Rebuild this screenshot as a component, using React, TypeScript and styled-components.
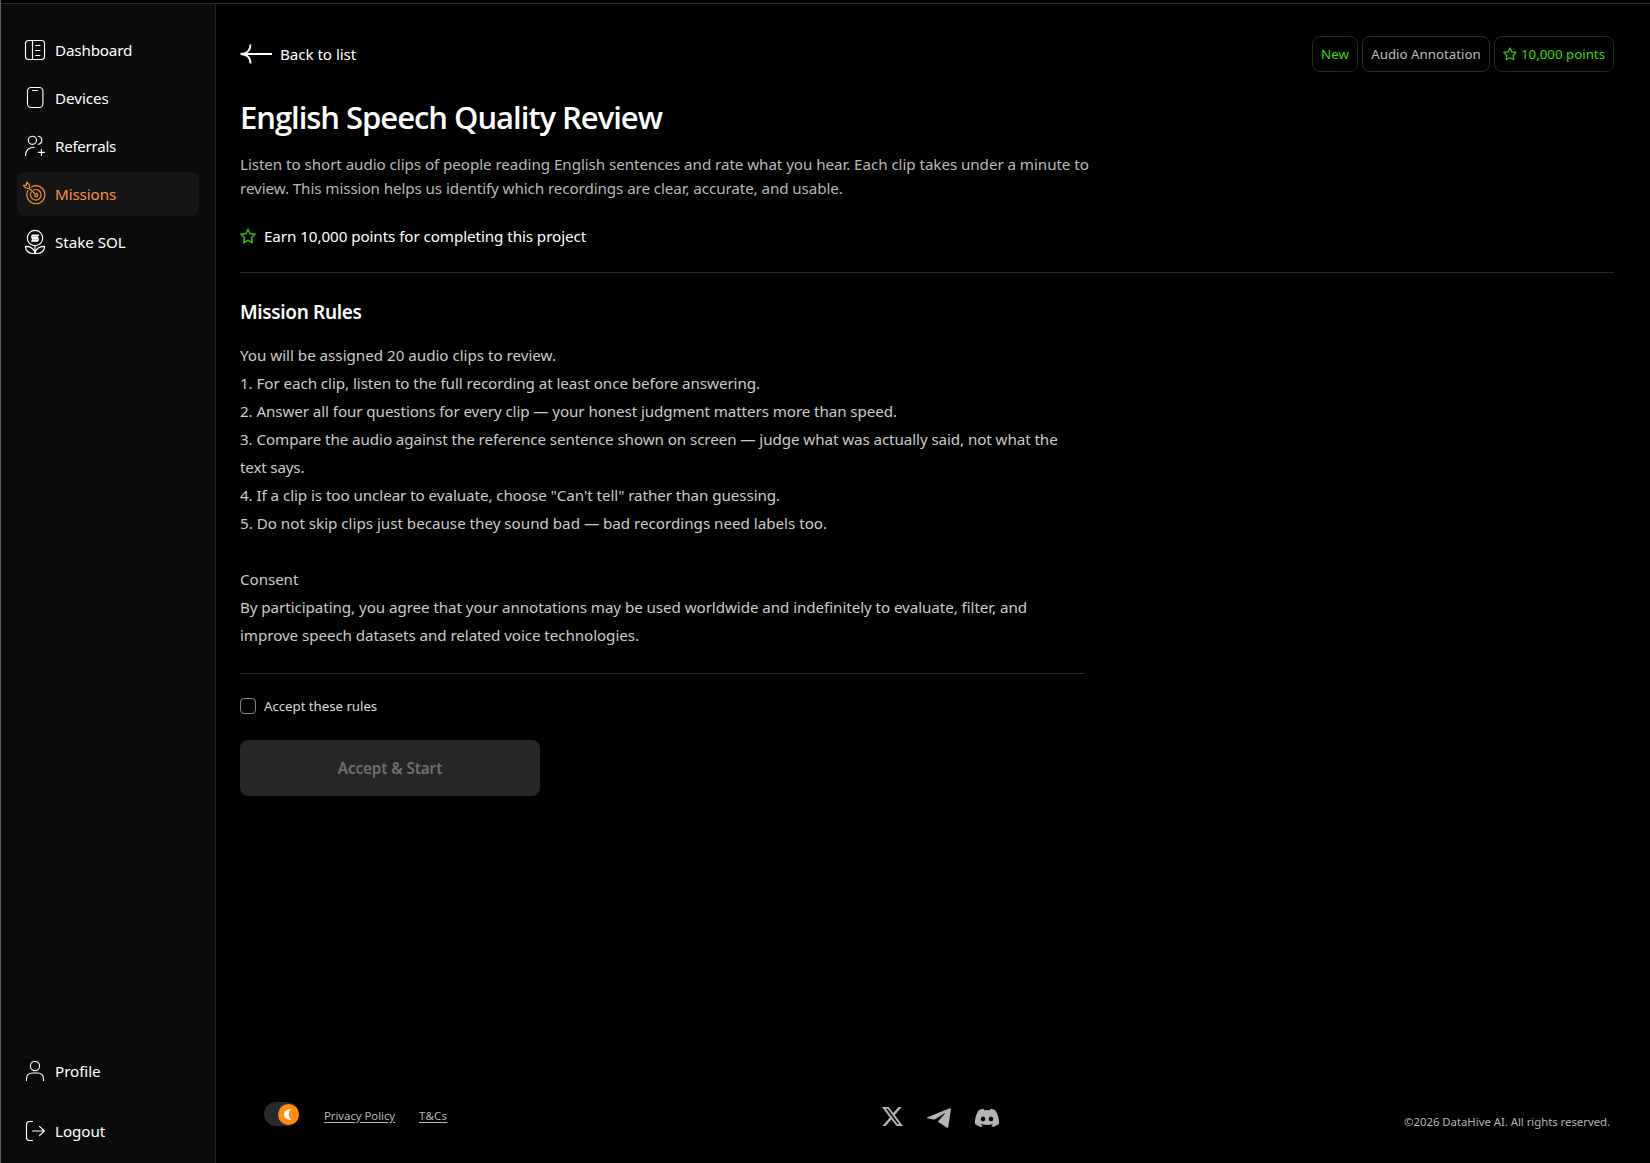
import React from "react";
import styled, { createGlobalStyle } from "styled-components";
import { BsTwitterX, BsDiscord } from "react-icons/bs";

const GlobalStyle = createGlobalStyle`
  *, *::before, *::after { box-sizing: border-box; }
  body {
    margin: 0;
    background: #000;
    color: #fff;
    font-family: "Segoe UI", "Noto Sans", "Open Sans", sans-serif;
    font-size: 15.2px;
    overflow: hidden;
  }
  p, h1, h2 { margin: 0; }
`;

const Shell = styled.div`
  display: flex;
  flex-direction: column;
  height: 100vh;
  border-left: 1px solid #5e5e5e;
`;

const TopStrip = styled.div`
  flex: none;
  height: 4px;
  border-bottom: 1px solid #2b2b2b;
`;

const Body = styled.div`
  flex: 1;
  display: flex;
  min-height: 0;
`;

const Sidebar = styled.nav`
  flex: none;
  display: flex;
  flex-direction: column;
  justify-content: space-between;
  width: 215px;
  padding: 24px 16px 10px;
  background: #0b0b0b;
  border-right: 1px solid #262626;
`;

const NavGroup = styled.div<{ $gap: number }>`
  display: flex;
  flex-direction: column;
  gap: ${(p) => p.$gap}px;
`;

const NavItem = styled.a<{ $active?: boolean; $tracking?: number }>`
  display: flex;
  align-items: center;
  gap: 8px;
  height: 44px;
  padding-left: 6px;
  border-radius: 8px;
  color: ${(p) => (p.$active ? "#ff9432" : "#fff")};
  background: ${(p) => (p.$active ? "#161616" : "transparent")};
  letter-spacing: ${(p) => p.$tracking ?? -0.05}px;
`;

const Glyph = styled.svg`
  flex: none;
  width: 24px;
  height: 24px;
  fill: none;
  stroke: currentColor;
  stroke-width: 1.15;
  stroke-linecap: round;
  stroke-linejoin: round;
  overflow: visible;
`;

const Main = styled.main`
  flex: 1;
  display: flex;
  flex-direction: column;
  padding: 32px 36px 0 24px;
`;

const Header = styled.header`
  display: flex;
  align-items: center;
  justify-content: space-between;
  height: 36px;
`;

const BackLink = styled.a`
  display: flex;
  align-items: center;
  gap: 8px;
  color: #fff;
  letter-spacing: -0.06px;
`;

const BackArrow = styled.svg`
  width: 32px;
  height: 20px;
  fill: none;
  stroke: #fff;
  stroke-width: 1.9;
`;

const Tags = styled.div`
  display: flex;
  gap: 4px;
`;

const Tag = styled.span<{ $green?: boolean; $width: number }>`
  display: flex;
  align-items: center;
  justify-content: center;
  gap: 4px;
  width: ${(p) => p.$width}px;
  height: 36px;
  border: 1px solid ${(p) => (p.$green ? "#103403" : "#2b2b2b")};
  border-radius: 8px;
  color: ${(p) => (p.$green ? "#3cdc0a" : "#bdbdbd")};
  font-size: 13.3px;
  white-space: nowrap;
`;

const Star = styled.svg<{ $size: number }>`
  flex: none;
  width: ${(p) => p.$size}px;
  height: ${(p) => p.$size}px;
  fill: none;
  stroke: #35c40a;
  stroke-width: 1.5;
  stroke-linejoin: round;
`;

const Title = styled.h1`
  margin-top: 25px;
  font-family: "Segoe UI", "Open Sans", "Noto Sans", sans-serif;
  font-size: 31px;
  font-weight: 600;
  line-height: 40px;
  letter-spacing: -1.03px;
`;

const Description = styled.div`
  margin-top: 15px;
  color: #b9b9b9;
  line-height: 24px;
`;

const Line = styled.p<{ $tracking?: number }>`
  min-height: 1lh;
  white-space: nowrap;
  letter-spacing: ${(p) => p.$tracking ?? 0}px;
`;

const Reward = styled.div`
  display: flex;
  align-items: center;
  gap: 8px;
  height: 24px;
  margin-top: 24px;
  letter-spacing: -0.075px;
`;

const Rule = styled.hr<{ $top: number; $width?: string }>`
  width: ${(p) => p.$width ?? "100%"};
  height: 1px;
  margin: ${(p) => p.$top}px 0 0;
  border: 0;
  background: #262626;
`;

const SectionTitle = styled.h2`
  margin-top: 25px;
  font-size: 19px;
  font-weight: 600;
  line-height: 28px;
  letter-spacing: -0.36px;
`;

const Rules = styled.div`
  margin-top: 15px;
  color: #cbcbcb;
  line-height: 28px;
`;

const AcceptLabel = styled.label`
  display: flex;
  align-items: center;
  align-self: flex-start;
  gap: 8px;
  height: 20px;
  margin-top: 22px;
  color: #dadada;
  font-size: 13.3px;
  letter-spacing: -0.05px;
`;

const Checkbox = styled.input`
  appearance: none;
  width: 16px;
  height: 16px;
  margin: 0;
  border: 1px solid #858585;
  border-radius: 4px;
  background: #000;
`;

const StartButton = styled.button`
  width: 300px;
  height: 56px;
  margin-top: 24px;
  border: 0;
  border-radius: 8px;
  background: #262626;
  color: #6f6f6f;
  font: inherit;
  font-weight: 600;
  letter-spacing: -0.06px;
`;

const Footer = styled.footer`
  display: grid;
  grid-template-columns: 1fr auto 1fr;
  align-items: center;
  height: 30px;
  margin: auto 4px 32px 24px;
  color: #b5b5b5;
  font-size: 11.4px;
`;

const FooterLeft = styled.div`
  display: flex;
  align-items: center;
`;

const Toggle = styled.span`
  display: flex;
  align-items: center;
  justify-content: flex-end;
  width: 35px;
  height: 24px;
  margin-bottom: 4px;
  border-radius: 12px;
  background: #2a2a2a;
`;

const Knob = styled.svg`
  width: 21px;
  height: 21px;
`;

const FooterLink = styled.a<{ $gap: number; $tracking: number }>`
  margin: 0 0 2px ${(p) => p.$gap}px;
  letter-spacing: ${(p) => p.$tracking}px;
  text-decoration: underline;
  text-underline-offset: 2px;
`;

const Socials = styled.div`
  display: flex;
  align-items: center;
  gap: 24px;
  padding-left: 7px;
  color: #b4b4b4;
`;

const SocialLink = styled.a<{ $drop?: number }>`
  display: flex;
  padding-top: ${(p) => p.$drop ?? 0}px;
`;

const Plane = styled.svg`
  width: 24px;
  height: 20px;
  fill: currentColor;
`;

const Copyright = styled.p`
  justify-self: end;
  padding-top: 11px;
  letter-spacing: -0.04px;
`;

function StarIcon({ size }: { size: number }) {
  return (
    <Star viewBox="0 0 16 16" $size={size}>
      <path d="M8 1.2l2.1 4.4 4.9.7-3.5 3.4.8 4.9L8 12.3l-4.3 2.3.8-4.9L1 6.3l4.9-.7z" />
    </Star>
  );
}

const DashboardIcon = () => (
  <Glyph viewBox="0 0 24 24">
    <rect x="2.500" y="2.500" width="19" height="19" rx="3" />
    <path d="M9.500 2.500v19M12.700 7.500h4.200M12.700 12.500h4.200M12.700 17.500h4.200" />
  </Glyph>
);

const DevicesIcon = () => (
  <Glyph viewBox="0 0 24 24">
    <rect x="4.5" y="1.5" width="15.4" height="20" rx="3.6" />
    <path d="M9.5 4.5h5" />
  </Glyph>
);

const ReferralsIcon = () => (
  <Glyph viewBox="0 0 24 24">
    <circle cx="9.4" cy="6.3" r="4.1" />
    <path d="M15.2 2.3c2.3.3 3.6 2 3.6 4s-1.3 3.7-3.6 4M2.5 21.5c0-5.2 3.4-8.3 8.7-8.3M18.4 15.2v6.2M15.3 18.3h6.2" />
  </Glyph>
);

const MissionsIcon = () => (
  <Glyph viewBox="0 0 24 24">
    <path d="M8.5 4.9A9 9 0 1 1 4.9 8.6" />
    <path d="M10.4 8.1A5.3 5.3 0 1 1 8.2 10.2" />
    <path d="M6.5 6.5l6.4 6.4" />
    <path d="M13.6 11.6a1.6 1.6 0 1 1-2 2" />
    <path d="M6.500 6.500L2.900 6 .300 3.300l3.100-.100.200-3 2.700 2.700z" />
  </Glyph>
);

const StakeIcon = () => (
  <Glyph viewBox="0 0 24 24">
    <circle cx="12" cy="8" r="7.7" />
    <path d="M12 15.7v8M11.8 23.5C11.3 18.500 7.800 16.300 2.300 16.400c.4 4.900 3.800 7.500 9.500 7.100zM12.200 23.500c.5-5 4-7.200 9.500-7.100-.4 4.900-3.800 7.500-9.500 7.100z" />
    <path
      fill="currentColor"
      stroke="none"
      d="M9 4.600h7.200l-1.200 2.100H7.800zM7.800 7.100H15l1.200 2.100H9zM9 9.600h7.200l-1.200 2.100H7.800z"
    />
  </Glyph>
);

const ProfileIcon = () => (
  <Glyph viewBox="0 0 24 24">
    <circle cx="12" cy="7" r="4.6" />
    <path d="M3.5 21.5V20c0-4 2.200-6 6-6h5c3.800 0 6 2 6 6v1.500" />
  </Glyph>
);

const LogoutIcon = () => (
  <Glyph viewBox="0 0 24 24">
    <path d="M9.500 2.500h-3a3 3 0 0 0-3 3v13a3 3 0 0 0 3 3h3M9.500 12h11.500M16.500 7.300L21.300 12l-4.800 4.700" />
  </Glyph>
);

const TelegramIcon = () => (
  <Plane viewBox="0 0 24 20">
    <path d="M.5 9.300L22.700.300c.800-.300 1.400.200 1.200 1.200L21.300 18.800c-.2 1-.9 1.300-1.700.8l-8-5.300c-.7-.5-.7-.9-.1-1.500L18 5.600c.5-.5.100-.7-.500-.300L8.300 11.200c-.6.400-1.200.400-1.900.200L.600 10.300c-.8-.2-.8-.7-.1-1z" />
  </Plane>
);

const NAV = [
  { label: "Dashboard", Icon: DashboardIcon, tracking: -0.16 },
  { label: "Devices", Icon: DevicesIcon },
  { label: "Referrals", Icon: ReferralsIcon, tracking: -0.3 },
  { label: "Missions", Icon: MissionsIcon, active: true, tracking: -0.12 },
  { label: "Stake SOL", Icon: StakeIcon },
];

const RULES: { text: string; tracking?: number }[] = [
  { text: "You will be assigned 20 audio clips to review.", tracking: -0.02 },
  { text: "1. For each clip, listen to the full recording at least once before answering.", tracking: -0.07 },
  { text: "2. Answer all four questions for every clip — your honest judgment matters more than speed.", tracking: -0.093 },
  { text: "3. Compare the audio against the reference sentence shown on screen — judge what was actually said, not what the", tracking: -0.088 },
  { text: "text says.", tracking: -0.18 },
  { text: "4. If a clip is too unclear to evaluate, choose \"Can't tell\" rather than guessing.", tracking: -0.07 },
  { text: "5. Do not skip clips just because they sound bad — bad recordings need labels too.", tracking: -0.015 },
  { text: "" },
  { text: "Consent", tracking: -0.08 },
  { text: "By participating, you agree that your annotations may be used worldwide and indefinitely to evaluate, filter, and", tracking: -0.075 },
  { text: "improve speech datasets and related voice technologies.", tracking: -0.075 },
];

export default function App() {
  return (
    <Shell>
      <GlobalStyle />
      <TopStrip />
      <Body>
        <Sidebar>
          <NavGroup $gap={4}>
            {NAV.map(({ label, Icon, active, tracking }) => (
              <NavItem key={label} $active={active} $tracking={tracking}>
                <Icon />
                {label}
              </NavItem>
            ))}
          </NavGroup>
          <NavGroup $gap={16}>
            <NavItem>
              <ProfileIcon />
              Profile
            </NavItem>
            <NavItem>
              <LogoutIcon />
              Logout
            </NavItem>
          </NavGroup>
        </Sidebar>
        <Main>
          <Header>
            <BackLink>
              <BackArrow viewBox="0 0 32 20">
                <path d="M1 10h31M10.5.5C10.5 6 7 9.8.5 10c6.500.2 10 4 10 9.500" />
              </BackArrow>
              Back to list
            </BackLink>
            <Tags>
              <Tag $green $width={46}>New</Tag>
              <Tag $width={128}>Audio Annotation</Tag>
              <Tag $green $width={120}>
                <StarIcon size={14} />
                10,000 points
              </Tag>
            </Tags>
          </Header>
          <Title>English Speech Quality Review</Title>
          <Description>
            <Line $tracking={-0.065}>
              Listen to short audio clips of people reading English sentences and rate what you hear. Each clip takes under a minute to
            </Line>
            <Line $tracking={-0.09}>
              review. This mission helps us identify which recordings are clear, accurate, and usable.
            </Line>
          </Description>
          <Reward>
            <StarIcon size={16} />
            Earn 10,000 points for completing this project
          </Reward>
          <Rule $top={24} />
          <SectionTitle>Mission Rules</SectionTitle>
          <Rules>
            {RULES.map((rule, i) => (
              <Line key={i} $tracking={rule.tracking}>{rule.text}</Line>
            ))}
          </Rules>
          <Rule $top={24} $width="845px" />
          <AcceptLabel>
            <Checkbox type="checkbox" />
            Accept these rules
          </AcceptLabel>
          <StartButton disabled>Accept &amp; Start</StartButton>
          <Footer>
            <FooterLeft>
              <Toggle>
                <Knob viewBox="0 0 20 20">
                  <circle cx="10" cy="10" r="10" fill="#ff8c0a" />
                  <path d="M12.400 5.300A5 5 0 1 0 12.400 14.700 6.200 6.200 0 0 1 12.400 5.300z" fill="#fff" />
                </Knob>
              </Toggle>
              <FooterLink $gap={25} $tracking={-0.06}>Privacy Policy</FooterLink>
              <FooterLink $gap={24} $tracking={0.3}>T&amp;Cs</FooterLink>
            </FooterLeft>
            <Socials>
              <SocialLink><BsTwitterX size={21} /></SocialLink>
              <SocialLink $drop={3}><TelegramIcon /></SocialLink>
              <SocialLink $drop={3}><BsDiscord size={24} /></SocialLink>
            </Socials>
            <Copyright>©2026 DataHive AI. All rights reserved.</Copyright>
          </Footer>
        </Main>
      </Body>
    </Shell>
  );
}
